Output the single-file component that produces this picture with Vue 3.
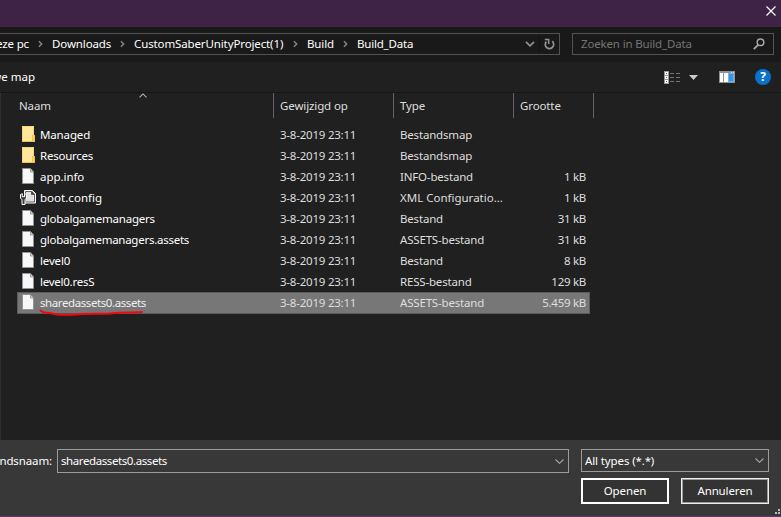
<script setup>
const crumbs = [
  { label: 'eze pc', cls: 'c-pc' },
  { label: 'Downloads', cls: 'c-down' },
  { label: 'CustomSaberUnityProject(1)', cls: 'c-project' },
  { label: 'Build', cls: 'c-build' },
  { label: 'Build_Data', cls: 'c-data' },
]
const date = '3-8-2019 23:11'
// tracking: letter spacing of the name, in px
const files = [
  { name: 'Managed', type: 'Bestandsmap', size: '', icon: 'folder', tracking: -0.14 },
  { name: 'Resources', type: 'Bestandsmap', size: '', icon: 'folder', tracking: -0.24 },
  { name: 'app.info', type: 'INFO-bestand', size: '1 kB', icon: 'file', tracking: -0.05 },
  { name: 'boot.config', type: 'XML Configuratio...', size: '1 kB', icon: 'config', tracking: 0.03 },
  { name: 'globalgamemanagers', type: 'Bestand', size: '31 kB', icon: 'file', tracking: -0.22 },
  { name: 'globalgamemanagers.assets', type: 'ASSETS-bestand', size: '31 kB', icon: 'file', tracking: -0.26 },
  { name: 'level0', type: 'Bestand', size: '8 kB', icon: 'file', tracking: -0.15 },
  { name: 'level0.resS', type: 'RESS-bestand', size: '129 kB', icon: 'file', tracking: -0.25 },
  { name: 'sharedassets0.assets', type: 'ASSETS-bestand', size: '5.459 kB', icon: 'file', selected: true, tracking: -0.41 },
]
</script>

<template>
  <div class="dialog">
    <header class="titlebar">
      <svg class="close" width="10" height="10" viewBox="0 0 10 10"><path d="M.5 .5 9.500 9.500M9.500 .5 .5 9.500" fill="none" stroke="#fff" stroke-width="1.200" /></svg>
    </header>

    <nav class="address-row">
      <div class="address">
        <div v-for="(c, i) in crumbs" :key="c.label" class="crumb" :class="c.cls">
          <span>{{ c.label }}</span>
          <svg v-if="i < crumbs.length - 1" class="sep" width="5" height="8" viewBox="0 0 5 8"><path d="M.9 1.200 3.700 4 .9 6.800" fill="none" stroke="#858585" stroke-width="1.500" /></svg>
        </div>
        <svg class="drop" width="10" height="6" viewBox="0 0 10 6"><path d="M1 .8 5 4.800 9 .8" fill="none" stroke="#8e8e8e" stroke-width="1.800" /></svg>
        <div class="refresh">
          <svg width="11" height="12" viewBox="0 0 11 12"><path d="M8.200 3.200A4.200 4.200 0 1 1 2.300 3.600" fill="none" stroke="#929292" stroke-width="1.700" /><path d="M.8 1.500H4.700V6" fill="none" stroke="#929292" stroke-width="1.500" /></svg>
        </div>
      </div>
      <div class="search">
        <span>Zoeken in Build_Data</span>
        <svg width="12" height="12" viewBox="0 0 12 12"><circle cx="7.500" cy="4.300" r="3.300" fill="none" stroke="#a8a8a8" stroke-width="1.500" /><path d="M5.200 6.800 .8 11.200" stroke="#a8a8a8" stroke-width="1.800" /></svg>
      </div>
    </nav>

    <div class="toolbar">
      <div class="new"><span>we map</span></div>
      <svg class="views" width="16" height="13" viewBox="0 0 16 13" shape-rendering="crispEdges">
        <path d="M0 0h5v13H0z" fill="#9b9b9b" />
        <path d="M1 1h3v3H1zM1 5h3v3H1zM1 9h3v3H1z" fill="#fff" />
        <path d="M2 2h1v1H2z" fill="#555" /><path d="M2 6h1v1H2z" fill="#2482e8" /><path d="M2 10h1v1H2z" fill="#d22b1f" />
        <path d="M6 2h4v1H6zM12 2h4v1h-4zM6 6h4v1H6zM12 6h4v1h-4zM6 10h4v1H6zM12 10h4v1h-4z" fill="#757575" />
      </svg>
      <svg class="tri" width="9" height="5" viewBox="0 0 9 5"><path d="M0 0h9L4.500 5z" fill="#c9c9c9" /></svg>
      <svg class="pane" width="16" height="12" viewBox="0 0 16 12" shape-rendering="crispEdges">
        <path d="M0 0h16v12H0z" fill="#919191" /><path d="M12 1h1v1h-1zM14 1h1v1h-1z" fill="#ddd" />
        <path d="M1 2h3v9H1zM5 2h4v9H5z" fill="#fff" /><path d="M9 2h6v9H9z" fill="#65b7ee" /><path d="M10 3h4v7h-4z" fill="#3794df" />
      </svg>
      <div class="help">?</div>
    </div>

    <main class="list">
      <svg class="sort" width="8" height="5" viewBox="0 0 8 5"><path d="M.5 4.300 4 .9 7.500 4.300" fill="none" stroke="#b5b5b5" stroke-width="1.100" /></svg>
      <div class="columns">
        <div class="col name"><span>Naam</span></div>
        <div class="col date"><span>Gewijzigd op</span></div>
        <div class="col type"><span>Type</span></div>
        <div class="col size"><span>Grootte</span></div>
      </div>
      <div class="rows">
        <div v-for="f in files" :key="f.name" class="row" :class="{ selected: f.selected }">
          <div class="icon">
            <svg v-if="f.icon === 'folder'" width="16" height="17" viewBox="0 0 16 17" shape-rendering="crispEdges">
              <path d="M2 0h12v9h1v7H2z" fill="#ffe79b" /><path d="M2 0h12v1H3v15H2zM13 1h1v8h-1z" fill="#f4d777" />
              <path d="M2 15h13v1H2zM12 9h3v7h-3z" fill="#ecc34c" /><path d="M13 10h1v5h-1z" fill="#ffd968" />
            </svg>
            <svg v-else-if="f.icon === 'file'" width="16" height="17" viewBox="0 0 16 17">
              <path d="M2.500 .5h8l3 3.500v11.500h-11z" fill="#f7f8f9" stroke="#949494" /><path d="M10.500 .5V4h3z" fill="#ddd" stroke="#888" stroke-width=".8" />
            </svg>
            <svg v-else width="16" height="17" viewBox="0 0 16 17">
              <path d="M4.500 1.500h8l3 3v9.500h-11z" fill="#dedede" stroke="#fff" /><path d="M5.500 2.500h6v3h3v7.500h-9z" fill="#e2e2e2" stroke="#555" stroke-width=".9" /><path d="M11.500 1.800v3.700h3.700z" fill="#444" />
              <path d="M.5 5.500v3.500L2 10.800V15.500h3v-4.700L6.500 9V5.500L4.700 4.700v3H2.300v-3z" fill="#3c3c3c" stroke="#fff" stroke-width="1" />
            </svg>
          </div>
          <span class="fname" :style="{ letterSpacing: f.tracking + 'px' }">{{ f.name }}</span>
          <span class="fdate">{{ date }}</span>
          <span class="ftype" :class="{ wide: f.icon === 'config' }">{{ f.type }}</span>
          <span class="fsize">{{ f.size }}</span>
          <svg v-if="f.selected" class="mark" width="106" height="8" viewBox="0 0 106 8"><path d="M1.500 1.500C3 4 6 3.300 12 4.300C20 6.500 31 6 40 5.200C52 4.300 64 5.300 74 4.200C84 3 93 4 103 3" fill="none" stroke="#f0080e" stroke-width="2" stroke-linecap="round" /></svg>
        </div>
      </div>
    </main>

    <footer class="footer">
      <div class="flabel"><span>ndsnaam:</span></div>
      <div class="combo filename"><span>sharedassets0.assets</span><svg width="9" height="5" viewBox="0 0 9 5"><path d="M.5 .5 4.500 4.300 8.500 .5" fill="none" stroke="#aaa" stroke-width="1.100" /></svg></div>
      <div class="right">
        <div class="combo types"><span>All types (*.*)</span><svg width="9" height="5" viewBox="0 0 9 5"><path d="M.5 .5 4.500 4.300 8.500 .5" fill="none" stroke="#aaa" stroke-width="1.100" /></svg></div>
        <div class="buttons">
          <button class="primary"><span>Openen</span></button>
          <button><span>Annuleren</span></button>
        </div>
      </div>
      <svg class="grip" width="5" height="5" viewBox="0 0 5 5" shape-rendering="crispEdges"><path d="M3 0h2v2H3zM0 3h2v2H0zM3 3h2v2H3z" fill="#bdbdbd" /></svg>
    </footer>
  </div>
</template>

<style>
body { margin: 0; background: #202020; }
</style>

<style scoped>
* { box-sizing: border-box; }
svg { display: block; flex: none; }
.dialog { position: relative; width: 781px; height: 517px; overflow: hidden; display: flex; flex-direction: column; background: #202020; color: #fff; font: 11.5px/16px "Noto Sans", "Open Sans", sans-serif; letter-spacing: -0.12px; white-space: nowrap; }
.titlebar { height: 27px; background: #3e2347; display: flex; justify-content: flex-end; padding: 6px 5px 0 0; }
.address-row { height: 35px; background: #191919; display: flex; padding-top: 6px; gap: 12px; }
.address { width: 560px; height: 22px; border: 1px solid #535353; border-left: 0; display: flex; align-items: center; }
.crumb { display: flex; align-items: center; justify-content: space-between; flex: none; }
.c-pc { width: 43px; justify-content: flex-end; gap: 9px; }
.c-down { width: 82px; padding-left: 9px; }
.c-project { width: 173px; padding-left: 9px; }
.c-build { width: 50px; padding-left: 9px; }
.c-data { padding-left: 9px; letter-spacing: -0.2px; }
.drop { margin-left: auto; margin-right: 4px; }
.refresh { width: 20px; height: 20px; border-left: 1px solid #131313; display: flex; align-items: center; padding-left: 4px; }
.search { width: 202px; height: 22px; border: 1px solid #535353; display: flex; align-items: center; justify-content: space-between; padding: 0 8px; color: #757575; letter-spacing: -0.16px; }
.toolbar { height: 31px; border-bottom: 1px solid #151515; display: flex; align-items: center; }
.new { width: 35px; display: flex; justify-content: flex-end; letter-spacing: 0; }
.new span { flex: none; }
.views { margin-left: 629px; }
.tri { margin-left: 9px; margin-top: 1px; }
.pane { margin-left: 21px; }
.help { width: 16px; height: 16px; margin-left: 20px; border-radius: 50%; background: #0872ce; font: bold 12px/16px "Open Sans", sans-serif; text-align: center; }
.list { position: relative; height: 347px; border-left: 1px solid #303030; }
.sort { position: absolute; left: 138px; top: 0; }
.columns { display: flex; height: 25px; color: #dedede; }
.col { border-right: 1px solid #636363; display: flex; align-items: center; }
.col.name { width: 273px; padding-left: 18px; }
.col.date, .col.type, .col.size { width: 120px; padding-left: 6px; }
.col.size { width: 80px; }
.rows { padding: 6px 0 0 16px; }
.row { position: relative; width: 573px; height: 21px; display: flex; align-items: center; color: #dedede; }
.row.selected { height: 22px; background: #777; box-shadow: inset 0 0 0 1px #5b5b5b; padding-bottom: 1px; }
.icon { width: 23px; padding-left: 3px; flex: none; }
.fname { width: 240px; color: #fff; }
.selected .fname { color: #f0f0f0; }
.fdate { width: 120px; letter-spacing: -0.22px; }
.ftype { width: 120px; letter-spacing: -0.18px; }
.ftype.wide { letter-spacing: 0; }
.fsize { width: 66px; text-align: right; letter-spacing: -0.28px; }
.mark { position: absolute; left: 22px; top: 17px; }
.footer { position: relative; height: 77px; background: #383838; border-bottom: 1px solid #613968; display: flex; padding-top: 9px; }
.flabel { width: 52px; height: 24px; display: flex; align-items: center; justify-content: flex-end; }
.flabel span { flex: none; }
.combo { display: flex; align-items: center; justify-content: space-between; border: 1px solid #9b9b9b; padding: 0 4px 0 3px; }
.filename { width: 512px; height: 24px; margin-left: 5px; letter-spacing: -0.41px; }
.right { margin-left: 12px; width: 188px; }
.types { height: 23px; }
.buttons { display: flex; justify-content: space-between; margin-top: 6px; }
button { width: 88px; height: 26px; padding: 0; border: 1px solid #eee; outline: 1px solid #9a9a9a; outline-offset: -2px; background: #333; color: #fff; font: inherit; letter-spacing: -0.12px; }
.primary { border: 2px solid #fff; outline: 0; }
.grip { position: absolute; right: 1px; bottom: 2px; }
</style>
